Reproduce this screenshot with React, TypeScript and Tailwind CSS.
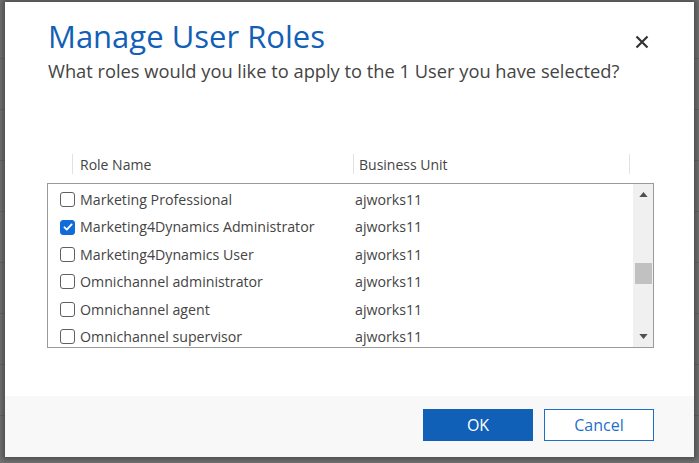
import React, { useState } from 'react';

const roles = [
  { name: 'Marketing Professional', bu: 'ajworks11', checked: false },
  { name: 'Marketing4Dynamics Administrator', bu: 'ajworks11', checked: true },
  { name: 'Marketing4Dynamics User', bu: 'ajworks11', checked: false },
  { name: 'Omnichannel administrator', bu: 'ajworks11', checked: false },
  { name: 'Omnichannel agent', bu: 'ajworks11', checked: false },
  { name: 'Omnichannel supervisor', bu: 'ajworks11', checked: false },
];

const font = { fontFamily: '"Segoe UI", "Open Sans", "Noto Sans", sans-serif' };

const Checkbox: React.FC<{ checked: boolean; onChange: () => void }> = ({ checked, onChange }) => (
  <button
    onClick={onChange}
    className={`w-[15px] h-[15px] rounded-[3px] flex items-center justify-center shrink-0 ${
      checked ? 'bg-[#0f6cda] border border-[#0f6cda]' : 'bg-white border border-[#606060]'
    }`}
  >
    {checked && (
      <svg viewBox="0 0 12 12" className="w-[12px] h-[12px]" fill="none" stroke="white" strokeWidth={1.9} strokeLinecap="round" strokeLinejoin="round">
        <path d="M2.5 6.3l2.3 2.3 4.8-5.2" />
      </svg>
    )}
  </button>
);

export default function App() {
  const [items, setItems] = useState(roles);

  const toggle = (i: number) =>
    setItems(items.map((r, idx) => (idx === i ? { ...r, checked: !r.checked } : r)));

  return (
    <div className="relative w-[699px] h-[463px] overflow-hidden bg-[#767676]" style={font}>
      {/* page behind the overlay */}
      <div className="flex flex-col pt-[8px]">
        {Array.from({ length: 9 }).map((_, i) => (
          <div key={i} className="h-[51px] border-b border-[#6a6a6a]" />
        ))}
      </div>

      {/* dialog */}
      <div className="absolute left-[5px] top-[2px] w-[689px] h-[455px] bg-white flex flex-col shadow-[0_0_6px_3px_rgba(0,0,0,0.35)]">
        <div className="flex-1 flex flex-col pl-[43px] pr-[40px]">
          <div className="flex items-start justify-between pt-[13px]">
            <h1 className="text-[31px] leading-[42px] text-[#1160b7]">Manage User Roles</h1>
            <button className="mt-[20px] mr-[5px] text-[#333]">
              <svg viewBox="0 0 14 14" className="w-[14px] h-[14px]" fill="none" stroke="#333" strokeWidth={2.2}>
                <path d="M1.5 1.5l11 11M12.5 1.5l-11 11" />
              </svg>
            </button>
          </div>
          <p className="text-[18.3px] leading-[24px] text-[#444] mt-[2px]">
            What roles would you like to apply to the 1 User you have selected?
          </p>

          {/* header */}
          <div className="mt-[71px] flex h-[20px] items-center text-[14px] text-[#444]">
            <div className="w-[24px]" />
            <div className="w-[281px] h-full border-l border-[#e1e1e1] pl-[7px] flex items-center">Role Name</div>
            <div className="w-[277px] h-full border-l border-[#e1e1e1] border-r pl-[5px] flex items-center">Business Unit</div>
          </div>

          {/* list */}
          <div className="mt-[9px] ml-[-1px] w-[607px] h-[165px] border border-[#9a9a9a] flex overflow-hidden">
            <div className="flex-1 flex flex-col pt-[2px] overflow-hidden">
              {items.map((r, i) => (
                <div key={r.name} className="h-[27.4px] shrink-0 flex items-center text-[14.2px] text-[#444]">
                  <div className="w-[32px] flex justify-end pr-[5px]">
                    <Checkbox checked={r.checked} onChange={() => toggle(i)} />
                  </div>
                  <div className="w-[275px] whitespace-nowrap">{r.name}</div>
                  <div>{r.bu}</div>
                </div>
              ))}
            </div>
            <div className="w-[20px] bg-[#f0f0f0] flex flex-col items-center py-[8px]">
              <svg viewBox="0 0 10 6" className="w-[9px] h-[5px]" fill="#505050">
                <path d="M5 0l5 6H0z" />
              </svg>
              <div className="w-[17px] h-[21px] bg-[#c1c1c1] mt-[66px]" />
              <div className="flex-1" />
              <svg viewBox="0 0 10 6" className="w-[9px] h-[5px]" fill="#505050">
                <path d="M5 6L0 0h10z" />
              </svg>
            </div>
          </div>
        </div>

        {/* footer */}
        <div className="h-[61px] bg-[#f8f8f8] flex items-start justify-end gap-[11px] pt-[13px] pr-[40px]">
          <button className="w-[110px] h-[32px] bg-[#1160b7] text-white text-[16px]">OK</button>
          <button className="w-[110px] h-[32px] bg-white border border-[#1f6fc9] text-[#1f6fc9] text-[16px]">Cancel</button>
        </div>
      </div>
    </div>
  );
}
